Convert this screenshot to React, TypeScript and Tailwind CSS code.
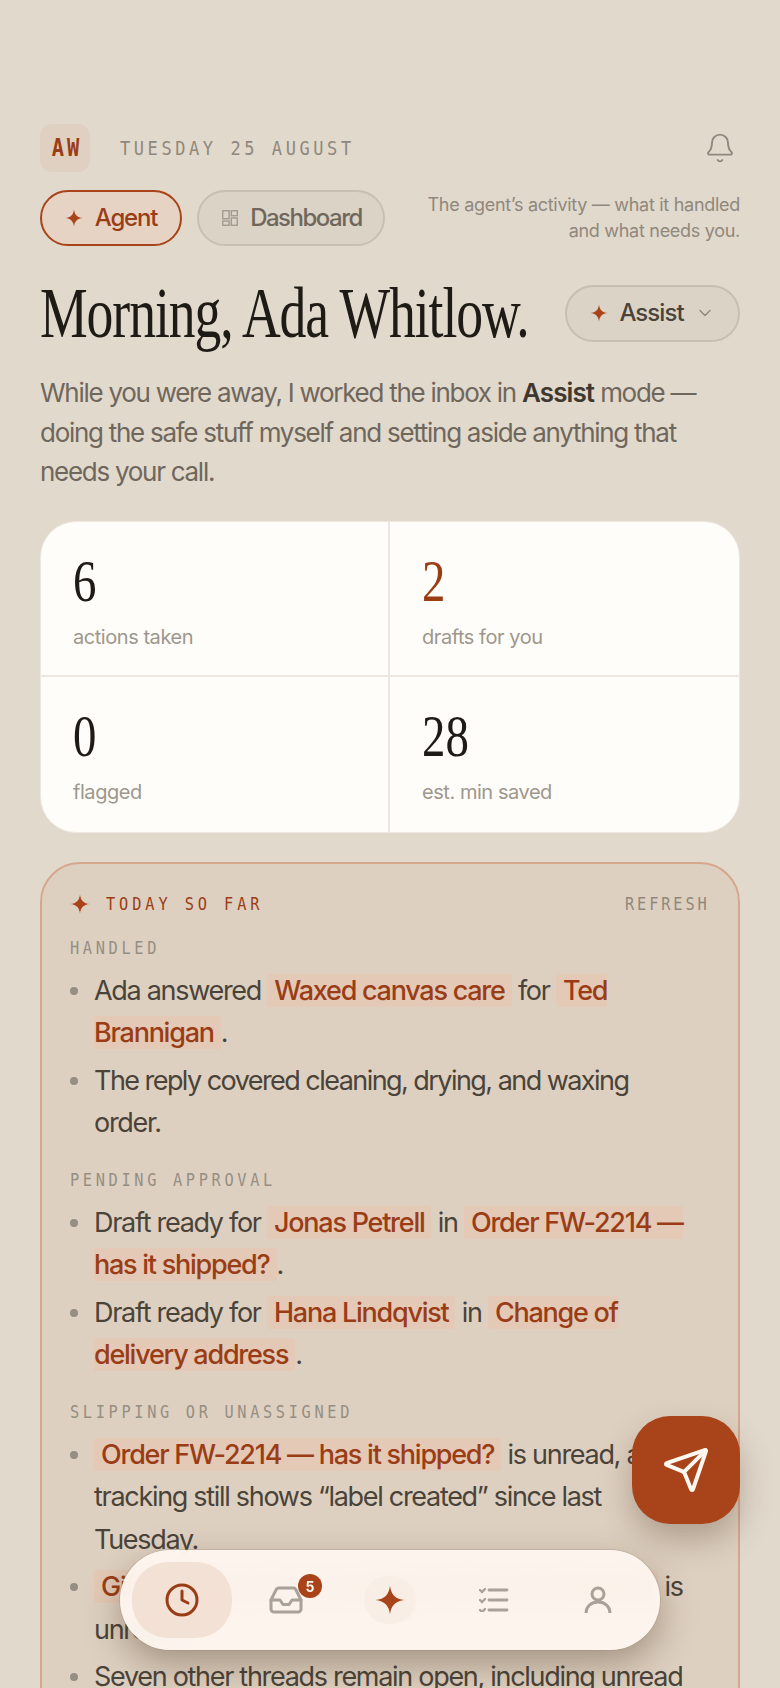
import { Bell, ChevronDown, Clock, Inbox, Send } from "lucide-react";
import type { ReactNode } from "react";

const Star = ({ className }: { className?: string }) => (
  <svg viewBox="0 0 24 24" className={className} fill="currentColor">
    <path d="M12 0.5C12.8 7.6 16.4 11.2 23.5 12C16.4 12.8 12.8 16.4 12 23.5C11.2 16.4 7.6 12.8 0.5 12C7.6 11.2 11.2 7.6 12 0.5Z" />
  </svg>
);

const Grid = () => (
  <svg viewBox="0 0 16 16" className="h-4 w-4 shrink-0 text-[#a39c90]" fill="none" stroke="currentColor" strokeWidth="1.4">
    <rect x="0.7" y="0.7" width="6.4" height="8" />
    <rect x="9.3" y="0.7" width="6" height="5" />
    <rect x="0.7" y="11" width="6.4" height="4.3" />
    <rect x="9.3" y="8" width="6" height="7.3" />
  </svg>
);

const Checks = () => (
  <svg viewBox="0 0 30 24" className="h-6 w-[30px]" fill="none" stroke="currentColor" strokeWidth="2.8" strokeLinecap="round">
    <path d="M10 2h18M10 12h18M10 22h18" />
    <path d="M1 2l2 2 3-3M1 12l2 2 3-3M1 22l2 2 3-3" strokeWidth="2.4" />
  </svg>
);

const Person = () => (
  <svg viewBox="0 0 28 28" className="h-7 w-7" fill="none" stroke="currentColor" strokeWidth="3">
    <circle cx="14" cy="8" r="6" />
    <path d="M2 27c0-6.5 5-11 12-11s12 4.500 12 11" />
  </svg>
);

const C = ({ children }: { children: ReactNode }) => (
  <span className="rounded-[3px] bg-[#e3c9b6] px-[7px] font-medium tracking-[-1.25px] text-[#9a3d16]">{children}</span>
);

const Label = ({ children, className }: { children: ReactNode; className?: string }) => (
  <div className={`origin-left scale-x-[0.85] whitespace-nowrap font-['DejaVu_Sans_Mono',monospace] text-[18px] leading-6 tracking-[4.3px] text-[#958e82] ${className ?? ""}`}>{children}</div>
);

const Item = ({ children }: { children: ReactNode }) => (
  <li className="relative pl-6 before:absolute before:left-0 before:top-[17px] before:h-2 before:w-2 before:rounded-full before:bg-[#958e82] before:content-['']">
    {children}
  </li>
);

const Stat = ({ n, label, accent, className }: { n: string; label: string; accent?: boolean; className?: string }) => (
  <div className={`h-[155px] px-8 pt-[31px] ${className ?? ""}`}>
    <div className={`origin-left scale-x-[0.78] font-['Liberation_Serif',serif] text-[60px] leading-[56px] ${accent ? "text-[#9a3d16]" : "text-[#1e1a15]"}`}>{n}</div>
    <div className="mt-[14px] text-[20px] leading-7 tracking-[-0.45px] text-[#9d978d]">{label}</div>
  </div>
);

const listCls = "mt-[10px] space-y-[5px] pr-3 text-[27px] leading-[42.500px] tracking-[-1.3px] text-[#4a4339]";

export default function App() {
  return (
    <div className="relative h-[1688px] overflow-hidden bg-[#e2d9cd] px-10 pt-[124px] font-['Inter',sans-serif]">
      <header className="flex h-12 items-center">
        <div className="flex h-12 w-[50px] items-center justify-center rounded-xl bg-[#e0d0c1] pl-[3px] text-[#9a3d16]">
          <span className="scale-x-[0.85] font-['DejaVu_Sans_Mono',monospace] text-[24px] font-bold tracking-[3.5px]">AW</span>
        </div>
        <div className="ml-[30px] origin-left scale-x-[0.85] whitespace-nowrap font-['DejaVu_Sans_Mono',monospace] text-[20px] tracking-[4.2px] text-[#8f887c]">TUESDAY 25 AUGUST</div>
        <Bell className="ml-auto mr-1 h-8 w-8 text-[#8f887c]" strokeWidth={1.4} />
      </header>

      <div className="mt-[18px] flex items-center">
        <div className="flex h-14 w-[142px] items-center justify-center gap-[12px] rounded-full border-2 border-[#a8431a] bg-[#e6d3c3] text-[24px] font-medium tracking-[-1.2px] text-[#9a3d16]">
          <Star className="h-[18px] w-[18px] text-[#a8431a]" />
          Agent
        </div>
        <div className="ml-[15px] flex h-14 w-[188px] items-center justify-center gap-[12px] rounded-full border-2 border-[#c8bfb2] bg-[#dcd3c7] pl-[2px] text-[24px] font-medium tracking-[-1.5px] text-[#6f675c]">
          <Grid />
          Dashboard
        </div>
        <p className="ml-auto text-right text-[18px] leading-[26px] tracking-[-0.29px] text-[#8f887c]">
          The agent’s activity — what it handled
          <br />
          and what needs you.
        </p>
      </div>

      <div className="mt-[38px] flex h-[58px] items-center justify-between">
        <h1 className="w-[488px] origin-left scale-x-[0.745] whitespace-nowrap font-['Liberation_Serif',serif] text-[72px] leading-[58px] tracking-[-0.02em] text-[#1e1a15]">Morning, Ada Whitlow.</h1>
        <div className="flex h-[57px] w-[175px] shrink-0 items-center justify-center gap-[11px] rounded-full border-2 border-[#c8bfb2] bg-[#dcd3c7] text-[24px] font-medium tracking-[-0.95px] text-[#4a4339]">
          <Star className="h-[18px] w-[18px] text-[#a8431a]" />
          Assist
          <ChevronDown className="h-5 w-5 text-[#8f887c]" strokeWidth={1.6} />
        </div>
      </div>

      <p className="mt-[31px] text-[26px] leading-[39.500px] tracking-[-1.28px] text-[#6f675c]">
        While you were away, I worked the inbox in <b className="font-semibold tracking-[-0.9px] text-[#3f382f]">Assist</b> mode — doing the safe stuff myself and setting aside anything that needs your call.
      </p>

      <div className="mt-[29px] grid grid-cols-[349px_1fr] overflow-hidden rounded-[36px] border border-[#ece7e0] bg-[#fffdf9]">
        <Stat n="6" label="actions taken" className="border-b-2 border-r-2 border-[#ece7e0]" />
        <Stat n="2" label="drafts for you" accent className="border-b-2 border-[#ece7e0]" />
        <Stat n="0" label="flagged" className="border-r-2 border-[#ece7e0]" />
        <Stat n="28" label="est. min saved" />
      </div>

      <section className="mt-[29px] rounded-[40px] border-2 border-[#d6a78d] bg-[#ded0c0] px-[28px] pb-10 pt-[28px]">
        <div className="flex h-6 items-center justify-between">
          <div className="flex items-center gap-[16px]">
            <Star className="h-5 w-5 text-[#a8431a]" />
            <span className="origin-left scale-x-[0.85] whitespace-nowrap font-['DejaVu_Sans_Mono',monospace] text-[18px] tracking-[4.6px] text-[#9a3d16]">TODAY SO FAR</span>
          </div>
          <span className="origin-right scale-x-[0.85] whitespace-nowrap font-['DejaVu_Sans_Mono',monospace] text-[18px] tracking-[3.4px] text-[#8f887c]">REFRESH</span>
        </div>

        <Label className="mt-[20px]">HANDLED</Label>
        <ul className={listCls}>
          <Item>Ada answered <C>Waxed canvas care</C> for <C>Ted Brannigan</C>.</Item>
          <Item><span className="tracking-[-1.55px]">The reply covered cleaning, drying, and waxing</span> order.</Item>
        </ul>

        <Label className="mt-[23px]">PENDING APPROVAL</Label>
        <ul className={listCls}>
          <Item>Draft ready for <C>Jonas Petrell</C> in <C>Order FW-2214 — has it shipped?</C>.</Item>
          <Item>Draft ready for <C>Hana Lindqvist</C> in <C>Change of delivery address</C>.</Item>
        </ul>

        <Label className="mt-[23px]">SLIPPING OR UNASSIGNED</Label>
        <ul className={listCls}>
          <Item><C>Order FW-2214 — has it shipped?</C> is unread, and tracking still shows “label created” since last Tuesday.</Item>
          <Item><C>Gift wrapping for a wedding order and shipping</C> is unread.</Item>
          <Item>Seven other threads remain open, including unread messages.</Item>
        </ul>
      </section>

      <button className="absolute left-[632px] top-[1416px] flex h-[108px] w-[108px] items-center justify-center rounded-[38px] bg-[#a8431a] text-[#fff8f0] shadow-[0_16px_32px_rgba(70,45,25,0.3)]">
        <Send size={48} strokeWidth={2} />
      </button>

      <nav className="absolute left-[120px] top-[1550px] flex h-[100px] w-[540px] items-center gap-1 rounded-[50px] bg-[#fdf6ef]/95 p-3 shadow-[0_0_0_1px_rgba(150,130,110,0.25),0_14px_36px_rgba(60,40,20,0.36)] backdrop-blur-md">
        <div className="flex h-[76px] w-[100px] items-center justify-center rounded-[36px] bg-[#f3e1d6] text-[#9a3d16]">
          <Clock size={36} strokeWidth={2} />
        </div>
        <div className="relative flex h-[76px] w-[100px] items-center justify-center text-[#a8a298]">
          <Inbox size={36} strokeWidth={2} />
          <span className="absolute left-[62px] top-[12px] flex h-6 w-6 items-center justify-center rounded-full bg-[#a8431a] text-[14px] font-bold text-[#fff8f0]">5</span>
        </div>
        <div className="flex h-[76px] w-[100px] items-center justify-center">
          <div className="flex h-12 w-[52px] items-center justify-center rounded-full bg-[#f8eee5] text-[#a8431a]">
            <Star className="h-[30px] w-[30px]" />
          </div>
        </div>
        <div className="flex h-[76px] w-[100px] items-center justify-center text-[#a8a298]"><Checks /></div>
        <div className="flex h-[76px] w-[100px] items-center justify-center text-[#a8a298]"><Person /></div>
      </nav>
    </div>
  );
}
